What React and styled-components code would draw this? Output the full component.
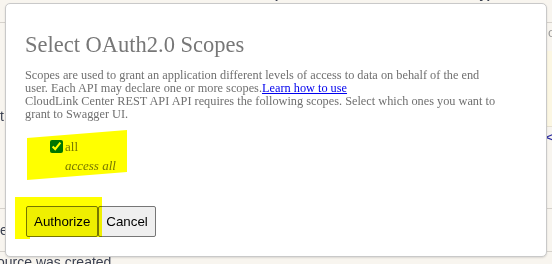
import React from 'react'
import styled, { createGlobalStyle } from 'styled-components'

const GlobalStyle = createGlobalStyle`
  html, body {
    margin: 0;
    padding: 0;
  }
  body {
    background: #f8f5ef;
    font-family: "Liberation Sans", Arial, sans-serif;
    overflow: hidden;
  }
`

function App() {
    return (
        <Page>
            <GlobalStyle />
            <Table>
                <HeadRow>
                    <HeadCell />
                    <HeadCell>Description</HeadCell>
                    <HeadCell>Parameter Type</HeadCell>
                    <HeadCell>Data</HeadCell>
                </HeadRow>
                <BodyRow>
                    <Cell>t</Cell>
                    <Cell />
                    <Cell />
                    <DataCell>
                        <Faint>o</Faint>
                        <Band />
                        <Caret>&lt;</Caret>
                    </DataCell>
                </BodyRow>
                <BodyRow short>
                    <Cell>e</Cell>
                    <Cell />
                    <Cell />
                    <Cell />
                </BodyRow>
                <Footnote>ource was created</Footnote>
            </Table>

            <Modal>
                <Title>Select OAuth2.0 Scopes</Title>
                <Description>
                    Scopes are used to grant an application different levels of access to data on behalf of the end
                    user. Each API may declare one or more scopes.<Link href="#">Learn how to use</Link>
                    <br />
                    CloudLink Center REST API API requires the following scopes. Select which ones you want to
                    grant to Swagger UI.
                </Description>
                <Scopes>
                    <ScopeRow>
                        <Check type="checkbox" defaultChecked />
                        <ScopeName>all</ScopeName>
                    </ScopeRow>
                    <ScopeDesc>access all</ScopeDesc>
                </Scopes>
                <Actions>
                    <Button>Authorize</Button>
                    <Button>Cancel</Button>
                </Actions>
            </Modal>

            <Highlight left={27} top={130} width={100} height={50}>
                <svg width="100" height="50" viewBox="0 0 100 50">
                    <polygon points="0,8 100,0 100,42 0,50" fill="#ffff00" />
                </svg>
            </Highlight>
            <Highlight left={15} top={197} width={87} height={42}>
                <svg width="87" height="42" viewBox="0 0 87 42">
                    <polygon points="0,0 87,0 87,40 15,40 15,42 0,42" fill="#ffff00" />
                </svg>
            </Highlight>
        </Page>
    )
}

export default App

const Page = styled.div`
    position: relative;
    width: 552px;
    height: 264px;
    overflow: hidden;
`

const Table = styled.div`
    display: flex;
    flex-direction: column;
    color: #3b4151;
    font-size: 14px;
`

const HeadRow = styled.div`
    display: grid;
    grid-template-columns: 235px 170px 125px 1fr;
    height: 38px;
    margin-top: -16px;
    border-bottom: 1px solid #d6d2cc;
    font-size: 13px;
    font-weight: bold;
`

const HeadCell = styled.div`
    padding-top: 2px;
`

const BodyRow = styled.div`
    display: grid;
    grid-template-columns: 235px 170px 125px 1fr;
    height: ${props => props.short ? '42px' : '185px'};
    border-bottom: 1px solid #d6d2cc;
`

const Cell = styled.div`
    line-height: 16px;
    display: flex;
    align-items: center;
`

const DataCell = styled.div`
    display: flex;
    flex-direction: column;
`

const Faint = styled.div`
    height: 18px;
    padding: 2px 0 0 18px;
    color: #999;
    font-size: 13px;
`

const Band = styled.div`
    margin-top: 8px;
    height: 75px;
    background: #fcf7e3;
    border-bottom: 1px solid #e6e0d0;
`

const Caret = styled.div`
    padding: 4px 0 0 16px;
    color: #2a2aa0;
    font-size: 11px;
    font-weight: bold;
`

const Footnote = styled.div`
    padding-top: 2px;
    margin-left: -3px;
    font-size: 14px;
    line-height: 16px;
`

const Modal = styled.div`
    position: absolute;
    left: 5px;
    top: 3px;
    width: 542px;
    height: 254px;
    box-sizing: border-box;
    padding: 28px 20px 0 19px;
    background: #ffffff;
    border: 1px solid #c9c9c9;
    border-radius: 5px;
    box-shadow: 0 1px 2px rgba(0, 0, 0, 0.12);
    font-family: "Liberation Serif", "Times New Roman", serif;
`

const Title = styled.h2`
    margin: 0;
    font-size: 22.5px;
    font-weight: normal;
    color: #777777;
`

const Description = styled.p`
    width: 472px;
    margin: 10.5px 0 0 0;
    font-size: 12.3px;
    line-height: 13.3px;
    color: #707070;
`

const Link = styled.a`
    color: #0000ee;
    text-decoration: underline;
`

const Scopes = styled.div`
    margin-top: 17px;
    padding-left: 21px;
    color: #777777;
    font-size: 13px;
`

const ScopeRow = styled.label`
    display: flex;
    align-items: center;
`

const Check = styled.input`
    width: 13px;
    height: 13px;
    margin: 0 2px 0 4px;
`

const ScopeName = styled.span`
    line-height: 16px;
`

const ScopeDesc = styled.div`
    margin-top: 3px;
    padding-left: 19px;
    font-style: italic;
    line-height: 16px;
`

const Actions = styled.div`
    display: flex;
    margin-top: 32px;
    padding-left: 1px;
`

const Button = styled.button`
    padding: 7px;
    border: 1px solid #767676;
    border-radius: 2px;
    background: #efefef;
    color: #000;
    font-family: "Liberation Sans", Arial, sans-serif;
    font-size: 13.333px;
    line-height: 15px;
`

const Highlight = styled.div`
    position: absolute;
    left: ${props => props.left}px;
    top: ${props => props.top}px;
    width: ${props => props.width}px;
    height: ${props => props.height}px;
    mix-blend-mode: multiply;
    pointer-events: none;
    svg {
        display: block;
    }
`
